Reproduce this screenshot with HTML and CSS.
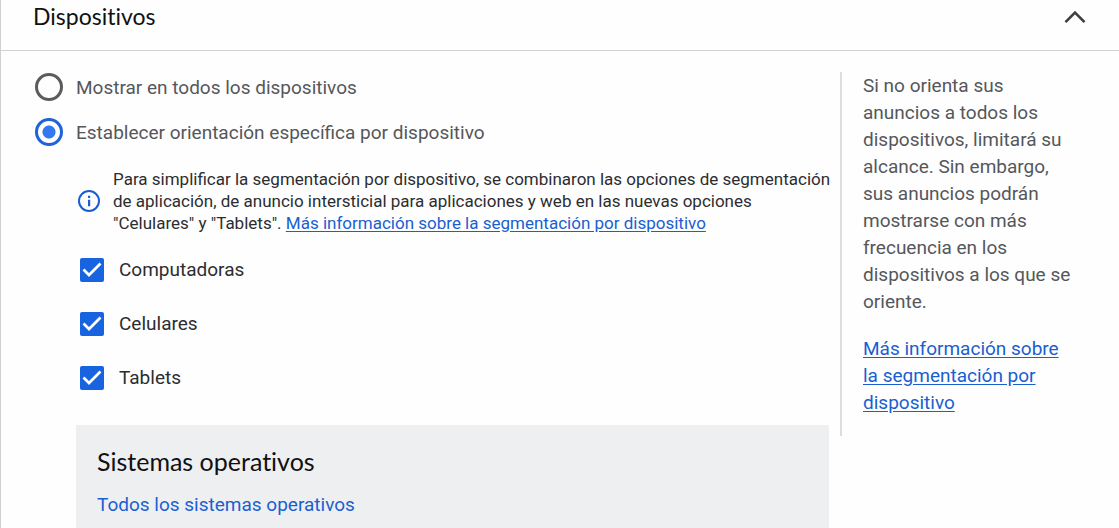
FILE: index.html
```html
<!DOCTYPE html>
<html lang="es">
<head>
    <meta charset="UTF-8">
    <meta name="viewport" content="width=device-width, initial-scale=1.0">
    <title>Dispositivos</title>
    <link rel="stylesheet" href="styles.css">
</head>
<body>
    <section class="card">
        <header class="card-header">
            <h1>Dispositivos</h1>
            <button type="button" class="collapse" aria-label="Contraer" aria-expanded="true">
                <svg width="22" height="14" viewBox="0 0 22 14" fill="none" stroke="#3c4043" stroke-width="2.6">
                    <path d="M1.5 12.2 11 2.6l9.500 9.600"/>
                </svg>
            </button>
        </header>

        <div class="card-body">
            <div class="settings">
                <div class="radio-group">
                    <label class="radio">
                        <input type="radio" name="devices" value="all">
                        <span>Mostrar en todos los dispositivos</span>
                    </label>
                    <label class="radio">
                        <input type="radio" name="devices" value="specific" checked>
                        <span>Establecer orientación específica por dispositivo</span>
                    </label>
                </div>

                <div class="targeting">
                    <div class="notice">
                        <svg class="notice-icon" width="24" height="24" viewBox="0 0 24 24">
                            <circle cx="12" cy="12" r="10" fill="none" stroke="#1a5fd0" stroke-width="2"/>
                            <path d="M11 6.800h2.200v2.200H11zM11 10.800h2.200v6.400H11z" fill="#1a5fd0"/>
                        </svg>
                        <p>Para simplificar la segmentación por dispositivo, se combinaron las opciones de segmentación de aplicación, de anuncio intersticial para aplicaciones y web en las nuevas opciones "Celulares" y "Tablets". <a href="#">Más información sobre la segmentación por dispositivo</a></p>
                    </div>

                    <div class="checks">
                        <label class="check"><input type="checkbox" checked><span>Computadoras</span></label>
                        <label class="check"><input type="checkbox" checked><span>Celulares</span></label>
                        <label class="check"><input type="checkbox" checked><span>Tablets</span></label>
                    </div>

                    <div class="panel">
                        <h2>Sistemas operativos</h2>
                        <a href="#">Todos los sistemas operativos</a>
                    </div>
                </div>
            </div>

            <aside class="help">
                <p>Si no orienta sus anuncios a todos los dispositivos, limitará su alcance. Sin embargo, sus anuncios podrán mostrarse con más frecuencia en los dispositivos a los que se oriente.</p>
                <p><a href="#">Más información sobre la segmentación por dispositivo</a></p>
            </aside>
        </div>
    </section>
</body>
</html>
```
FILE: styles.css
```css
* {
    box-sizing: border-box;
}
body {
    margin: 0;
    background: #fefefe;
    color: #2c2d30;
    font-family: Roboto, "Liberation Sans", sans-serif;
    font-size: 19px;
    line-height: 27px;
}
h1, h2, p {
    margin: 0;
}
a {
    color: #1a5fd0;
    text-underline-offset: 2px;
}
.card {
    display: flex;
    flex-direction: column;
    min-height: 100vh;
    border-left: 1px solid #d0d1d3;
}
.card-header {
    display: flex;
    align-items: center;
    justify-content: space-between;
    padding: 0 33px 17px 32px;
    border-bottom: 1px solid #d0d1d3;
}
h1, h2 {
    color: #111;
    font-family: Lato, "Open Sans", sans-serif;
    font-weight: 400;
    font-variant-ligatures: none;
}
h1 {
    font-size: 23px;
    line-height: 33px;
}
h2 {
    font-size: 25px;
    line-height: 32px;
}
.collapse {
    display: flex;
    padding: 0;
    border: 0;
    background: none;
    cursor: pointer;
}
.card-body {
    flex: 1;
    display: flex;
    align-items: stretch;
    gap: 11px;
    padding: 21px 44px 0 34px;
}
.settings {
    flex: 1;
    min-width: 0;
    display: flex;
    flex-direction: column;
}
.radio-group {
    display: flex;
    flex-direction: column;
    gap: 17px;
    padding-top: 1px;
}
.radio {
    display: flex;
    align-items: center;
    gap: 13px;
    color: #55575b;
}
.radio input {
    appearance: none;
    flex: none;
    width: 28px;
    height: 28px;
    margin: 0;
    border: 3px solid #5a5b5e;
    border-radius: 50%;
}
.radio input:checked {
    border-color: #1f63d8;
    background: radial-gradient(circle, #3478f0 6px, transparent 7px);
}
.targeting {
    flex: 1;
    display: flex;
    flex-direction: column;
    padding: 22px 0 0 41px;
}
.notice {
    display: flex;
    align-items: center;
    gap: 12px;
    margin-right: -8px;
    padding-left: 1px;
    font-size: 17px;
    line-height: 22px;
}
.notice-icon {
    flex: none;
}
.checks {
    display: flex;
    flex-direction: column;
    gap: 27px;
    padding: 22px 4px 34px;
}
.check {
    display: flex;
    align-items: center;
    gap: 15px;
}
.check input {
    appearance: none;
    flex: none;
    width: 24px;
    height: 24px;
    margin: 0;
    border-radius: 2px;
    background: #1863e0 url("data:image/svg+xml,%3Csvg xmlns='http://www.w3.org/2000/svg' viewBox='0 0 24 24'%3E%3Cpath d='M3.500 11.500l5.500 5.500L20.500 5.500' fill='none' stroke='white' stroke-width='2.700'/%3E%3C/svg%3E");
}
.panel {
    flex: 1;
    padding: 20px 21px 8px;
    background: #eeeff1;
}
.panel a {
    display: inline-block;
    margin-top: 14px;
    text-decoration: none;
}
.help {
    align-self: flex-start;
    flex: none;
    width: 235px;
    padding: 0 0 20px 21px;
    border-left: 2px solid #dcdde0;
    color: #55575b;
}
.help p + p {
    margin-top: 20px;
}
```
